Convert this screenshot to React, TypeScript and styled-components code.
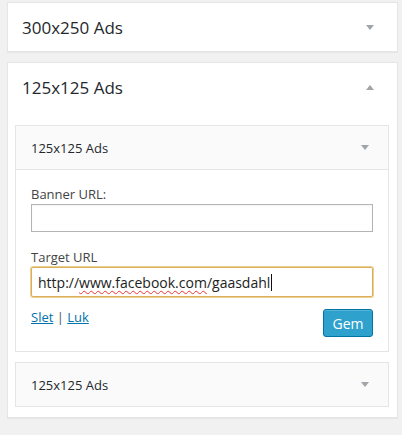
import styled, { createGlobalStyle } from 'styled-components';

const Global = createGlobalStyle`
  html, body {
    margin: 0;
    padding: 0;
    background: #f1f1f1;
    font-family: "Open Sans", "Liberation Sans", sans-serif;
    color: #23282d;
  }
`;

const Page = styled.div`
  padding: 2px 4px 16px 7px;
  display: flex;
  flex-direction: column;
  gap: 10px;
`;

const Section = styled.div`
  background: #fff;
  border: 1px solid #e5e5e5;
  box-shadow: 0 1px 1px rgba(0, 0, 0, 0.04);
`;

const SectionHead = styled.div`
  height: 48px;
  display: flex;
  align-items: center;
  justify-content: space-between;
  padding: 0 23px 0 14px;
  font-size: 17px;
  font-weight: 400;
  color: #23282d;
`;

const SectionBody = styled.div`
  padding: 14px 8px 10px 7px;
  display: flex;
  flex-direction: column;
  gap: 10px;
`;

const Arrow = styled.span<{ $up?: boolean }>`
  width: 0;
  height: 0;
  border-left: 4px solid transparent;
  border-right: 4px solid transparent;
  ${(p) => (p.$up ? 'border-bottom: 5px solid #a0a5aa;' : 'border-top: 5px solid #a0a5aa;')}
`;

const Widget = styled.div`
  border: 1px solid #e5e5e5;
  background: #fff;
`;

const WidgetHead = styled.div<{ $open?: boolean }>`
  height: 43px;
  display: flex;
  align-items: center;
  justify-content: space-between;
  padding: 0 19px 0 15px;
  background: #fafafa;
  border-bottom: ${(p) => (p.$open ? '1px solid #e5e5e5' : 'none')};
  font-size: 13px;
  font-weight: 400;
  color: #23282d;
`;

const WidgetBody = styled.div`
  padding: 15px 15px 14px 15px;
`;

const Label = styled.div`
  font-size: 13px;
  line-height: 18px;
  color: #444;
  margin-bottom: 1px;
`;

const Field = styled.div<{ $focus?: boolean }>`
  box-sizing: border-box;
  height: ${(p) => (p.$focus ? '30px' : '28px')};
  border: 1px solid ${(p) => (p.$focus ? '#dcae5a' : '#b4b4b4')};
  border-radius: ${(p) => (p.$focus ? '2px' : '0')};
  box-shadow: ${(p) => (p.$focus ? '0 0 0 1px rgba(228, 186, 100, 0.7)' : 'inset 0 1px 2px rgba(0,0,0,.05)')};
  padding: 0 6px;
  display: flex;
  align-items: center;
  font-size: 14px;
  color: #222;
  white-space: nowrap;
  margin-bottom: 16px;
`;

const Misspelt = styled.span`
  text-decoration: underline wavy #e33;
  text-decoration-thickness: 1px;
  text-underline-offset: 2px;
`;

const Caret = styled.span`
  display: inline-block;
  width: 1px;
  height: 17px;
  background: #111;
  margin-left: 1px;
`;

const Actions = styled.div`
  display: flex;
  justify-content: space-between;
  align-items: flex-start;
  margin-top: -4px;
`;

const Links = styled.div`
  font-size: 13px;
  line-height: 18px;
  color: #555;
  margin-top: -1px;
`;

const Link = styled.a`
  color: #0073aa;
  text-decoration: underline;
`;

const SaveButton = styled.button`
  height: 28px;
  width: 50px;
  padding: 0;
  border: 1px solid #0074a2;
  border-radius: 3px;
  background: #2ea2cc;
  color: #fff;
  font-family: inherit;
  font-size: 14px;
  box-shadow: inset 0 1px 0 rgba(120, 200, 230, 0.5);
`;

export default function App() {
  return (
    <>
      <Global />
      <Page>
        <Section>
          <SectionHead>
            300x250 Ads
            <Arrow />
          </SectionHead>
        </Section>
        <Section>
          <SectionHead>
            125x125 Ads
            <Arrow $up />
          </SectionHead>
          <SectionBody>
            <Widget>
              <WidgetHead $open>
                125x125 Ads
                <Arrow />
              </WidgetHead>
              <WidgetBody>
                <Label>Banner URL:</Label>
                <Field />
                <Label>Target URL</Label>
                <Field $focus>
                  http://<Misspelt>www.facebook.com</Misspelt>/gaasdahl
                  <Caret />
                </Field>
                <Actions>
                  <Links>
                    <Link href="#">Slet</Link> | <Link href="#">Luk</Link>
                  </Links>
                  <SaveButton>Gem</SaveButton>
                </Actions>
              </WidgetBody>
            </Widget>
            <Widget>
              <WidgetHead>
                125x125 Ads
                <Arrow />
              </WidgetHead>
            </Widget>
          </SectionBody>
        </Section>
      </Page>
    </>
  );
}
